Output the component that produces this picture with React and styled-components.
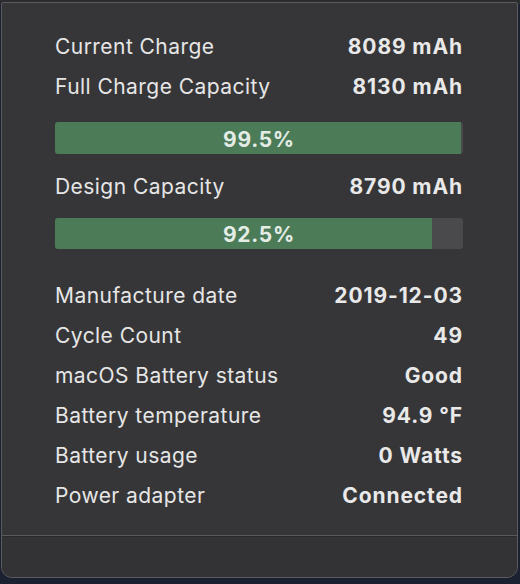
import React from "react";
import styled, { createGlobalStyle } from "styled-components";

const GlobalStyle = createGlobalStyle`
  html, body {
    margin: 0;
    padding: 0;
    background: #1b2130;
  }
  body {
    font-family: Inter, "Noto Sans", "Liberation Sans", sans-serif;
    -webkit-font-smoothing: antialiased;
  }
`;

const Page = styled.div`
  width: 520px;
  height: 584px;
  padding: 2px 2px 0 1px;
  box-sizing: border-box;
  background: linear-gradient(#2c2c2e 0 4px, #1b2130 4px);
`;

const Window = styled.div`
  height: 576px;
  box-sizing: border-box;
  display: flex;
  flex-direction: column;
  background: #363638;
  border: 1px solid #5b5b5d;
  border-radius: 2px 2px 11px 11px;
  overflow: hidden;
`;

const Content = styled.div`
  flex: 1;
  padding: 23px 54px 0 53px;
  display: flex;
  flex-direction: column;
`;

const Row = styled.div`
  height: 40px;
  display: flex;
  align-items: center;
  justify-content: space-between;
  font-size: 21px;
  color: #e6e6e6;
`;

const Label = styled.span`
  font-weight: 400;
  letter-spacing: 0.45px;
`;

const Value = styled.span`
  font-weight: 700;
  color: #e9e9e9;
  letter-spacing: 0.9px;
`;

const Bar = styled.div`
  position: relative;
  height: ${(p) => p.$h}px;
  margin: ${(p) => p.$m};
  background: #4a4a4c;
  border-radius: 3px;
  overflow: hidden;
`;

const Fill = styled.div`
  height: 100%;
  background: #4b7b57;
`;

const BarText = styled.span`
  position: absolute;
  inset: 0;
  display: flex;
  align-items: center;
  justify-content: center;
  font-size: 21px;
  font-weight: 700;
  letter-spacing: 0.7px;
  color: #e4ece6;
  padding-top: 2px;
`;

const Gap = styled.div`
  height: ${(p) => p.$h}px;
`;

const Footer = styled.div`
  height: 41px;
  border-top: 1px solid #5a5a5c;
  box-shadow: inset 0 1px 0 #2a2a2c;
  background: #333335;
`;

const details = [
  ["Manufacture date", "2019-12-03"],
  ["Cycle Count", "49"],
  ["macOS Battery status", "Good"],
  ["Battery temperature", "94.9 °F"],
  ["Battery usage", "0 Watts"],
  ["Power adapter", "Connected"],
];

function ProgressBar({ pct, h, m }) {
  return (
    <Bar $h={h} $m={m}>
      <Fill style={{ width: `${pct}%` }} />
      <BarText>{pct}%</BarText>
    </Bar>
  );
}

export default function App() {
  return (
    <>
      <GlobalStyle />
      <Page>
        <Window>
          <Content>
            <Row>
              <Label>Current Charge</Label>
              <Value>8089 mAh</Value>
            </Row>
            <Row>
              <Label>Full Charge Capacity</Label>
              <Value>8130 mAh</Value>
            </Row>
            <ProgressBar pct={99.5} h={32} m="16px 0 12px" />
            <Row>
              <Label>Design Capacity</Label>
              <Value>8790 mAh</Value>
            </Row>
            <ProgressBar pct={92.5} h={31} m="12px 0 0" />
            <Gap $h={26} />
            {details.map(([label, value]) => (
              <Row key={label}>
                <Label>{label}</Label>
                <Value>{value}</Value>
              </Row>
            ))}
          </Content>
          <Footer />
        </Window>
      </Page>
    </>
  );
}
